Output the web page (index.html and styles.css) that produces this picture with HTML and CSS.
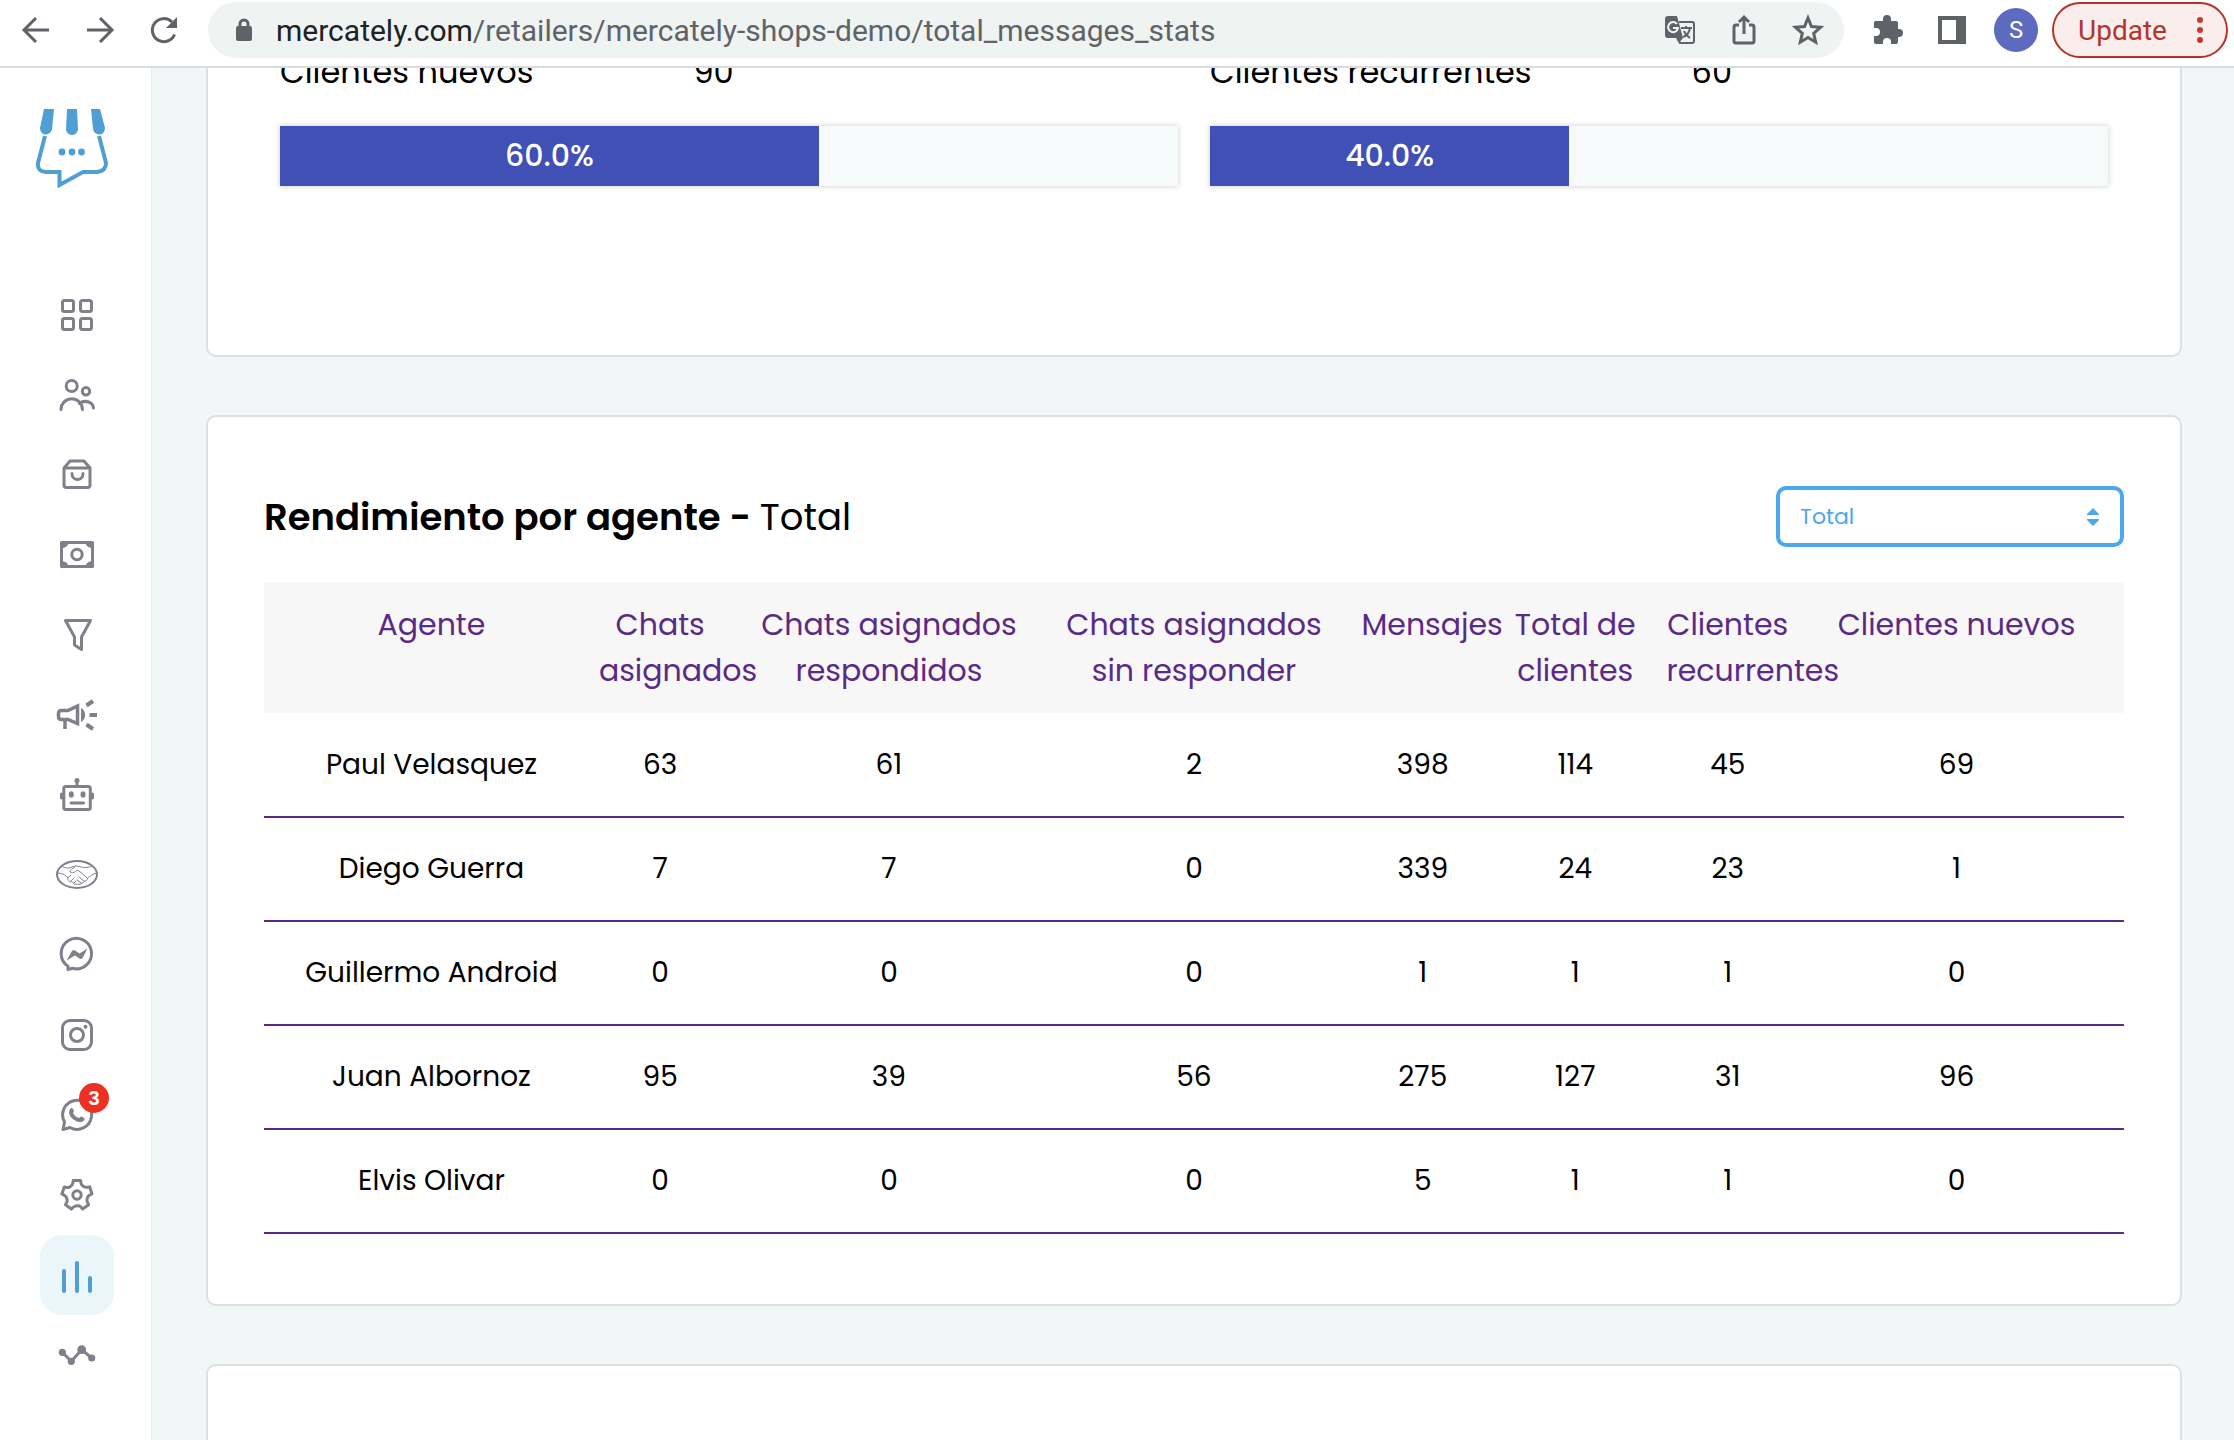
FILE: index.html
```html
<!DOCTYPE html>
<html lang="es">
<head>
<meta charset="utf-8">
<title>Mercately</title>
<link rel="stylesheet" href="styles.css">
</head>
<body>
<header class="toolbar">
  <button class="tool" aria-label="Atrás"><svg width="32" height="32" viewBox="0 0 32 32"><path d="M29 16H4M16 4 4 16l12 12" class="line"/></svg></button>
  <button class="tool" aria-label="Adelante"><svg width="32" height="32" viewBox="0 0 32 32"><path d="M3 16h25M16 4l12 12-12 12" class="line"/></svg></button>
  <button class="tool" aria-label="Recargar"><svg width="32" height="32" viewBox="0 0 32 32"><path d="M26.500 20.500A11.500 11.500 0 1 1 24 8" class="line"/><path d="M29 3v11H18z" class="solid"/></svg></button>
  <div class="omnibox">
    <svg class="lock" width="16" height="24" viewBox="0 0 16 24"><path d="M4 10V6a4 4 0 0 1 8 0v4" class="line thin"/><rect y="8" width="16" height="15" rx="2" class="solid"/></svg>
    <span class="url"><span class="host">mercately.com</span>/retailers/mercately-shops-demo/total_messages_stats</span>
    <button class="tool" aria-label="Traducir"><svg width="32" height="32" viewBox="0 0 32 32"><path d="M15 8h13a2 2 0 0 1 2 2v17a2 2 0 0 1-2 2H16l-3-5" fill="none" stroke="#5f6368" stroke-width="2"/><path d="M4 2h9l6 22H4a3 3 0 0 1-3-3V5a3 3 0 0 1 3-3z" class="solid"/><path d="M14 24h5l-4 5z" class="solid"/><path d="M13 10a5 5 0 1 0 1 4h-5" fill="none" stroke="#eff3f2" stroke-width="2"/><path d="M17 14h11M22 12v2M26 14c-1 5-4 8-7 9M20 17c1 3 3 5 6 7" fill="none" stroke="#5f6368" stroke-width="2"/></svg></button>
    <button class="tool" aria-label="Compartir"><svg width="32" height="32" viewBox="0 0 32 32"><path d="M11 11H8a2 2 0 0 0-2 2v14a2 2 0 0 0 2 2h16a2 2 0 0 0 2-2V13a2 2 0 0 0-2-2h-3M16 20V3M11 8l5-5 5 5" class="line"/></svg></button>
    <button class="tool" aria-label="Favoritos"><svg width="32" height="32" viewBox="0 0 32 32"><path d="M16 4l3.500 8.500 9 .800-6.800 6 2 8.900L16 23.500l-7.700 4.700 2-8.900-6.800-6 9-.800z" class="line"/></svg></button>
  </div>
  <button class="tool first" aria-label="Extensiones"><svg width="32" height="32" viewBox="0 0 32 32"><path d="M3 7h8V5a4 4 0 0 1 8 0v2h5a2 2 0 0 1 2 2v6h1a4 4 0 0 1 0 8h-1v5a2 2 0 0 1-2 2h-5v-2a4 4 0 0 0-8 0v2H4a2 2 0 0 1-2-2v-6h2a4 4 0 0 0 0-8H2V8z" class="solid"/></svg></button>
  <button class="tool" aria-label="Panel lateral"><svg width="32" height="32" viewBox="0 0 32 32"><path d="M2 2h28v28H2zM6 6v20h14V6z" fill-rule="evenodd" class="solid"/></svg></button>
  <button class="tool" aria-label="Perfil"><span class="avatar">S</span></button>
  <button class="update">Update<svg width="8" height="28" viewBox="0 0 8 28"><circle cx="4" cy="4" r="3"/><circle cx="4" cy="14" r="3"/><circle cx="4" cy="24" r="3"/></svg></button>
</header>
<div class="page">
  <aside class="sidebar">
    <a href="#" class="logo" aria-label="Mercately"><svg width="74" height="80" viewBox="0 0 74 80">
      <g fill="#4f9fd5"><path d="M9 1h10l-2 20a6 6 0 0 1-12-1zM32 1h10l1 20a6 6 0 0 1-12 0zM56 1h9l5 19a6 6 0 0 1-12 1z"/><circle cx="27" cy="44" r="3.400"/><circle cx="37" cy="44" r="3.400"/><circle cx="46.500" cy="44" r="3.400"/></g>
      <path d="M10 28 3 55q-1 8.500 8 9H24.500V77L48 64H62q9-1 9-9L64 28" fill="none" stroke="#4f9fd5" stroke-width="4"/></svg></a>
    <nav class="menu">
      <a href="#" aria-label="Inicio"><svg viewBox="0 0 48 48"><rect x="9.500" y="9.500" width="11" height="11" rx="2"/><rect x="27.500" y="9.500" width="11" height="11" rx="2"/><rect x="9.500" y="27.500" width="11" height="11" rx="2"/><rect x="27.500" y="27.500" width="11" height="11" rx="2"/></svg></a>
      <a href="#" aria-label="Clientes"><svg viewBox="0 0 48 48"><circle cx="18.700" cy="15" r="5.500"/><circle cx="33" cy="20.300" r="3.700"/><path d="M8 38.500a10.700 10.700 0 0 1 21.400 0M26.500 32.500c6-4.500 13.500-1 14 4.500"/></svg></a>
      <a href="#" aria-label="Productos"><svg viewBox="0 0 48 48"><path d="M11 17v17q0 2.500 2.500 2.500h21q2.500 0 2.500-2.500V17l-6-7H17zM11 17h26M19 22.500c0 8 11 8 11 0"/></svg></a>
      <a href="#" aria-label="Pagos"><svg viewBox="0 0 48 48"><rect x="8.500" y="11.500" width="31" height="24"/><circle cx="24" cy="23.500" r="5.200"/><path d="M8 11h8a8 8 0 0 1-8 6zM40 11h-8a8 8 0 0 0 8 6zM8 36h8a8 8 0 0 0-8-6zM40 36h-8a8 8 0 0 1 8-6z" class="fill"/></svg></a>
      <a href="#" aria-label="Embudos"><svg viewBox="0 0 48 48"><path d="M12.500 9.500h25l-9 16.500v12.500l-7-4.500v-8z"/></svg></a>
      <a href="#" aria-label="Campañas"><svg viewBox="0 0 48 48"><path d="M24.500 15v17.500L15 28.500H8.500q-3 0-3-3v-3q0-3 3-3H15zM12 29v9" stroke-linecap="butt" stroke-linejoin="miter" stroke-width="3.500"/><path d="M28 17a8 8 0 0 1 0 14z" class="fill"/><path d="M33.500 14.500 40 10M36.500 24H44M33.500 33.500 40 38" stroke-linecap="butt" stroke-width="4"/></svg></a>
      <a href="#" aria-label="Chatbots"><svg viewBox="0 0 48 48"><rect x="10.800" y="15.500" width="26.500" height="23" rx="2"/><path d="M24 9v6M8.500 23v4M39.500 23v4M18 32h12.500"/><g class="fill"><circle cx="24" cy="9.500" r="2.500"/><ellipse cx="18.300" cy="23.500" rx="2.500" ry="3.300"/><ellipse cx="30" cy="23.500" rx="2.500" ry="3.300"/></g></svg></a>
      <a href="#" aria-label="Mercado Libre"><svg viewBox="0 0 48 48"><ellipse cx="24" cy="23.500" rx="20" ry="13.500" stroke-width="2"/><path d="M9 15.500c4 2 7 2 10 .500 3-1.500 5-1 7-.500 4 1 8 2 13-.500M4.500 22c5 0 7 2 10 4 0 4 3 5 5 5 1 2 3 3 5 2 2 1 4 0 4-1 2 0 3-1 3-2 2 0 3-1 3-3 3-2 5-4 9-5M22 16c-3 2-5 3-5 5 2 1 5 1 7-2 4 2 7 5 10 8M24 29l4 3M26 26l5 4M15 27l3-3M18 30l3-3M21 32l2-2" stroke-width="1"/></svg></a>
      <a href="#" aria-label="Messenger"><svg viewBox="0 0 48 48"><path d="M15 38.500v-3.200a15.200 15.200 0 1 1 4.500 2z"/><path d="M13.500 29.500 19 20q1.500-1.500 3-.500l4.500 3 8-5L29.500 27q-1.500 1.500-3 .500l-4.500-3z" class="fill"/></svg></a>
      <a href="#" aria-label="Instagram"><svg viewBox="0 0 48 48"><rect x="9.500" y="9.500" width="29" height="29" rx="7.500"/><circle cx="24" cy="24" r="6.500"/><circle cx="32.500" cy="15.700" r="2" class="fill"/></svg></a>
      <a href="#" aria-label="WhatsApp"><svg viewBox="0 0 48 48"><path d="M10 38.500 11.500 31A14.500 14.500 0 1 1 17 36.500z"/><path d="M17.500 17.500q2-2 3.500 2.500l-1 2q2 4 6 5l2-1.500q5 1 3 4-3 3.500-9 0-5-3-6-7.500 0-3 1.500-4.500z" class="fill"/></svg><span class="badge">3</span></a>
      <a href="#" aria-label="Configuración"><svg viewBox="0 0 48 48"><g transform="translate(24 24)"><circle r="4.200"/><path id="tooth" d="M-3.600-14.600H3.600Q4-10.500 5-9.800L7.500-8Q8.500-7.400 12.700-8"/><use href="#tooth" transform="rotate(72)"/><use href="#tooth" transform="rotate(144)"/><use href="#tooth" transform="rotate(216)"/><use href="#tooth" transform="rotate(288)"/></g></svg></a>
      <a href="#" class="active" aria-label="Estadísticas"><svg viewBox="0 0 48 48"><path d="M11 20v20M24 12v28M37 27v13" stroke-width="4"/></svg></a>
      <a href="#" aria-label="Tendencias"><svg viewBox="0 0 48 48"><path d="M9.300 21.300l9 9 10.400-11.600 10 8.300"/><g class="fill"><circle cx="9.300" cy="21.300" r="3.600"/><circle cx="18.300" cy="30.300" r="3.600"/><circle cx="28.700" cy="18.700" r="4.400"/><circle cx="38.700" cy="27" r="3.600"/></g></svg></a>
    </nav>
  </aside>
  <main class="content">
    <section class="card summary">
      <div class="metric">
        <p class="metric-label"><span>Clientes nuevos</span><span>90</span></p>
        <div class="track"><div class="fill-bar" style="width:60%">60.0%</div></div>
      </div>
      <div class="metric">
        <p class="metric-label"><span>Clientes recurrentes</span><span>60</span></p>
        <div class="track"><div class="fill-bar" style="width:40%">40.0%</div></div>
      </div>
    </section>
    <section class="card report">
      <div class="report-head">
        <h2>Rendimiento por agente - <span>Total</span></h2>
        <div class="picker">
          <select aria-label="Periodo"><option>Total</option></select>
          <svg width="14" height="18" viewBox="0 0 14 18"><path d="M7 0l6 6v1H1V6zM7 18l6-6v-1H1v1z" fill="#4aa8ef"/></svg>
        </div>
      </div>
      <table>
        <colgroup><col class="edge"><col class="narrow"><col class="wide"><col class="wide"><col class="narrow"><col class="narrow"><col class="narrow"><col class="edge"></colgroup>
        <thead><tr><th>Agente</th><th>Chats asignados</th><th>Chats asignados respondidos</th><th>Chats asignados sin responder</th><th>Mensajes</th><th>Total de clientes</th><th>Clientes recurrentes</th><th>Clientes nuevos</th></tr></thead>
        <tbody>
          <tr><td>Paul Velasquez</td><td>63</td><td>61</td><td>2</td><td>398</td><td>114</td><td>45</td><td>69</td></tr>
          <tr><td>Diego Guerra</td><td>7</td><td>7</td><td>0</td><td>339</td><td>24</td><td>23</td><td>1</td></tr>
          <tr><td>Guillermo Android</td><td>0</td><td>0</td><td>0</td><td>1</td><td>1</td><td>1</td><td>0</td></tr>
          <tr><td>Juan Albornoz</td><td>95</td><td>39</td><td>56</td><td>275</td><td>127</td><td>31</td><td>96</td></tr>
          <tr><td>Elvis Olivar</td><td>0</td><td>0</td><td>0</td><td>5</td><td>1</td><td>1</td><td>0</td></tr>
        </tbody>
      </table>
    </section>
    <section class="card next"></section>
  </main>
</div>
</body>
</html>
```
FILE: styles.css
```css
* { box-sizing: border-box; }
body {
  margin: 0;
  height: 100vh;
  display: flex;
  flex-direction: column;
  overflow: hidden;
  font-family: Poppins, Inter, sans-serif;
  color: #000;
  background: #f3f6f7;
}
button { border: 0; padding: 0; background: none; font: inherit; color: inherit; }

.toolbar {
  flex: none;
  display: flex;
  align-items: center;
  padding: 2px 6px 8px 4px;
  background: #fff;
  border-bottom: 2px solid #dadddf;
  font-family: Roboto, sans-serif;
  font-size: 28px;
}
.tool { flex: none; width: 64px; height: 56px; display: grid; place-items: center; }
.tool.first { margin-left: 12px; }
.line { fill: none; stroke: #5f6368; stroke-width: 3; }
.solid { fill: #5f6368; }
.omnibox {
  flex: 1;
  min-width: 0;
  display: flex;
  align-items: center;
  margin-left: 12px;
  padding: 0 4px 0 28px;
  border-radius: 28px;
  background: #eff3f2;
}
.url { flex: 1; margin-left: 24px; color: #5f6368; font-size: 30px; white-space: nowrap; overflow: hidden; }
.host { color: #202124; }
.avatar {
  width: 44px;
  height: 44px;
  border-radius: 50%;
  background: #5c6bc0;
  color: #fff;
  font-size: 24px;
  line-height: 44px;
}
.update {
  display: flex;
  align-items: center;
  justify-content: space-between;
  width: 176px;
  height: 56px;
  margin-left: 4px;
  padding: 0 22px 0 24px;
  border: 2px solid #b3352b;
  border-radius: 28px;
  background: #f9eeec;
  color: #b3352b;
}
.update svg { fill: #c5392f; }

.page { flex: 1; min-height: 0; display: flex; }
.sidebar { flex: none; width: 152px; overflow: hidden; background: #fff; border-right: 1px solid #e8eced; }
.logo { display: block; height: 80px; margin: 40px 0 87px 35px; }
.menu { display: flex; flex-direction: column; padding-left: 40px; }
.menu a { position: relative; width: 74px; height: 80px; display: grid; place-items: center; border-radius: 22px; color: #7f808c; }
.menu svg { width: 48px; height: 48px; fill: none; stroke: currentColor; stroke-width: 3; stroke-linecap: round; stroke-linejoin: round; }
.menu .fill { fill: currentColor; stroke: none; }
.menu .active { background: #eaf6f9; color: #4f9fd5; }
.badge {
  position: absolute;
  top: 8px;
  right: 5px;
  width: 30px;
  height: 30px;
  border-radius: 50%;
  background: #ee3024;
  color: #fff;
  font: bold 20px/30px "Liberation Sans", sans-serif;
  text-align: center;
}

.content { flex: 1; min-width: 0; overflow: hidden; display: flex; flex-direction: column; gap: 58px; padding: 0 52px 0 54px; }
.card { flex: none; background: #fff; border: 2px solid #dce0e2; border-radius: 10px; }
.summary { display: flex; gap: 32px; margin-top: -20px; padding: 0 72px 169px; border-top: 0; }
.metric { flex: 1; }
.metric-label { display: flex; gap: 160px; margin: 0 0 30px; font-size: 32px; line-height: 48px; }
.track { background: #f7fafb; box-shadow: 0 0 6px rgba(0, 0, 0, .2); }
.fill-bar { background: #4050b5; color: #fff; font-size: 30px; font-weight: 500; line-height: 60px; text-align: center; }

.report { padding: 69px 56px 70px; }
.report-head { display: flex; align-items: center; justify-content: space-between; margin-bottom: 35px; }
h2 { margin: 0; font-size: 37px; line-height: 56px; font-weight: 600; }
h2 span { font-weight: 400; }
.picker { display: grid; align-items: center; width: 348px; }
.picker > * { grid-area: 1 / 1; }
.picker svg { justify-self: end; margin-right: 24px; pointer-events: none; }
select {
  appearance: none;
  width: 100%;
  height: 61px;
  padding: 0 20px;
  border: 4px solid #4aa8ef;
  border-radius: 10px;
  background: #fff;
  color: #4aa8ef;
  font-family: inherit;
  font-size: 22px;
}
table { width: 100%; table-layout: fixed; border-collapse: collapse; text-align: center; }
.edge { width: 17.2%; }
.wide { width: 16.4%; }
.narrow { width: 8.2%; }
th, td { padding: 0 15px; }
th:first-child, td:first-child { padding-left: 30px; }
th:last-child, td:last-child { padding-right: 30px; }
th { padding-top: 20px; padding-bottom: 19px; vertical-align: top; font-size: 30px; line-height: 46px; font-weight: 400; color: #5b2a86; }
thead { background: #f6f7f6; }
td { height: 104px; font-size: 28px; }
tbody tr { border-bottom: 2px solid #5b2a86; }
.next { min-height: 240px; }
```
